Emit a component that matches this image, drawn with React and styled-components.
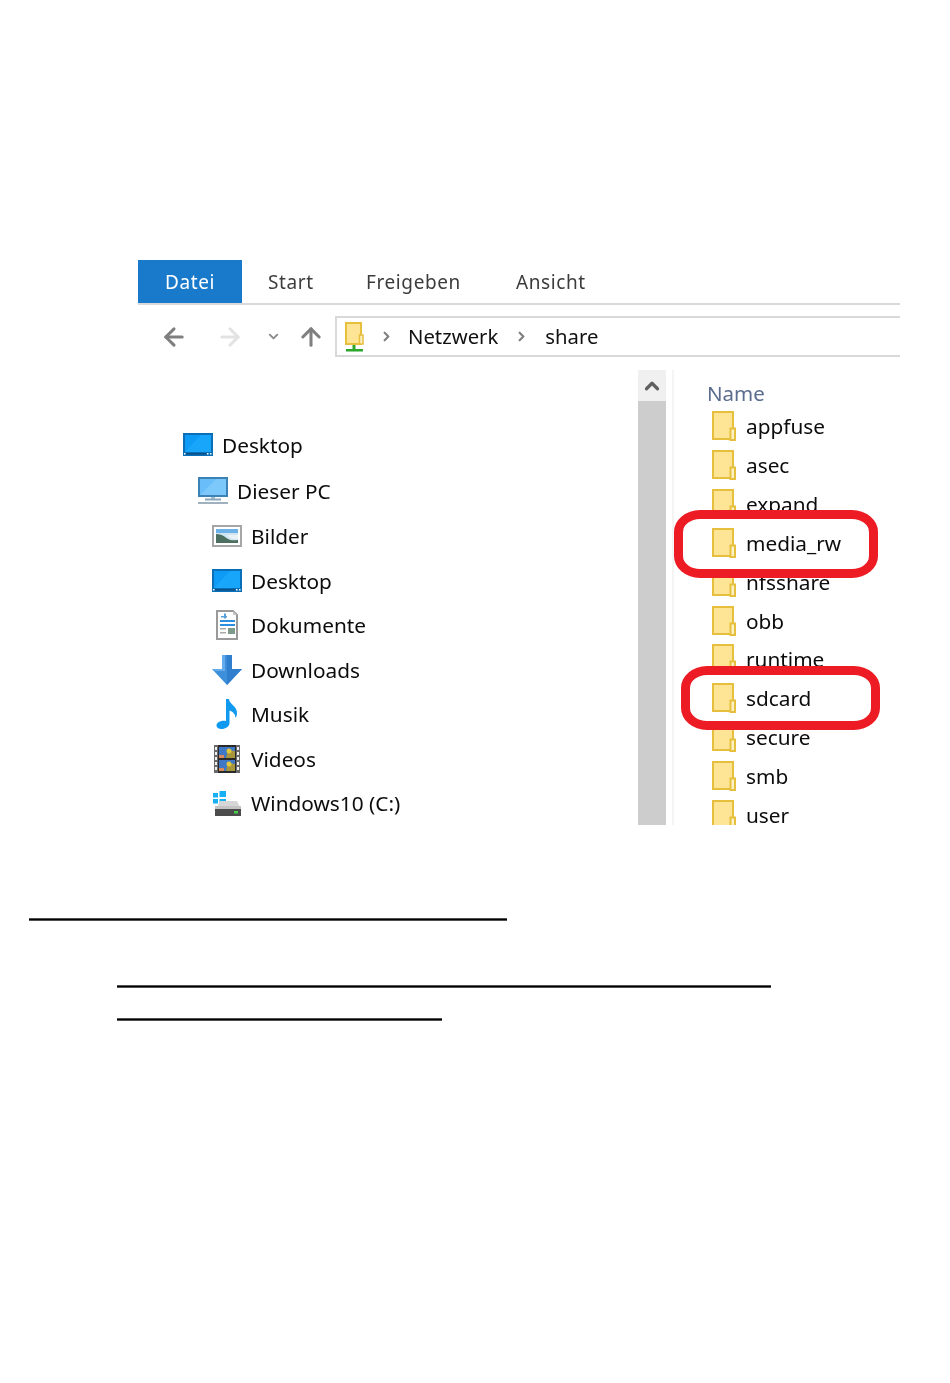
import React from 'react';
import styled, { createGlobalStyle } from 'styled-components';
import { ArrowLeft, ArrowRight, ArrowUp, ChevronDown, ChevronRight, ChevronUp } from 'lucide-react';

const GlobalStyle = createGlobalStyle`
  html, body {
    margin: 0;
    padding: 0;
    background: #fff;
  }
  body {
    font-family: 'Noto Sans', 'Open Sans', sans-serif;
  }
`;

const Page = styled.div`
  width: 950px;
  height: 1383px;
  padding-top: 260px;
  box-sizing: border-box;
  overflow: hidden;
  background: #fff;
`;

const ExplorerWindow = styled.div`
  width: 762px;
  height: 565px;
  margin-left: 138px;
  overflow: hidden;
  display: flex;
  flex-direction: column;
  filter: blur(0.35px);
`;

const TabBar = styled.div`
  display: flex;
  flex: none;
  height: 43px;
  border-bottom: 2px solid #d9d9d9;
`;

const Tab = styled.div`
  display: flex;
  align-items: center;
  justify-content: ${p => (p.$active ? 'center' : 'flex-start')};
  width: ${p => p.$width}px;
  padding-left: ${p => (p.$active ? 0 : 26)}px;
  box-sizing: border-box;
  background: ${p => (p.$active ? '#1979ca' : 'transparent')};
  color: ${p => (p.$active ? '#fff' : '#3c3c3c')};
  font-size: 19px;
  letter-spacing: 0.6px;
`;

const NavBar = styled.div`
  display: flex;
  flex: none;
  align-items: center;
  height: 41px;
  margin-top: 11px;
`;

const NavButton = styled.div`
  display: flex;
  align-items: center;
  justify-content: center;
  width: ${p => p.$width}px;
  height: 41px;
  flex: none;
`;

const AddressBox = styled.div`
  display: flex;
  align-items: center;
  flex: 1;
  height: 41px;
  box-sizing: border-box;
  margin-left: 10px;
  padding-left: 8px;
  border: 2px solid #d9d9d9;
  border-right: none;
`;

const Crumb = styled.span`
  position: relative;
  top: -1px;
  color: #111;
  font-size: 20.3px;
`;

const CrumbArrow = styled.span`
  display: flex;
  align-items: center;
  justify-content: center;
  width: ${p => p.$width}px;
`;

const Content = styled.div`
  display: flex;
  flex: 1;
  min-height: 0;
  margin-top: 13px;
`;

const NavPane = styled.div`
  width: 500px;
  flex: none;
  padding-top: 52px;
  box-sizing: border-box;
`;

const TreeRow = styled.div`
  display: flex;
  align-items: center;
  height: ${p => p.$height || 44.5}px;
  padding-left: ${p => p.$indent}px;
  color: #0c0c0c;
  font-size: 20.8px;
`;

const TreeIcon = styled.span`
  display: flex;
  align-items: center;
  justify-content: center;
  width: 30px;
  height: 32px;
  margin-right: 9px;
  flex: none;
`;

const Scrollbar = styled.div`
  width: 28px;
  flex: none;
  background: #cdcdcd;
`;

const ScrollButton = styled.div`
  display: flex;
  align-items: center;
  justify-content: center;
  height: 31px;
  background: #f0f0f0;
`;

const Divider = styled.div`
  width: 2px;
  flex: none;
  margin-left: 6px;
  background: #f4f4f4;
`;

const ListPane = styled.div`
  flex: 1;
  padding-top: 10px;
`;

const ColumnHeader = styled.div`
  height: 27px;
  line-height: 26px;
  padding-left: 33px;
  color: #5b6c8e;
  font-size: 20.5px;
`;

const FileRow = styled.div`
  position: relative;
  display: flex;
  align-items: center;
  height: 38.85px;
  padding-left: 38px;
  color: #0c0c0c;
  font-size: 20.8px;
  z-index: ${p => (p.$marked ? 2 : 'auto')};
`;

const RowContent = styled.div`
  position: relative;
  display: flex;
  align-items: center;
  z-index: 1;
`;

const FileName = styled.span`
  margin-left: 10px;
  line-height: 18px;
`;

const RedRing = styled.div`
  position: absolute;
  left: ${p => p.$left}px;
  top: ${p => p.$top}px;
  width: ${p => p.$width}px;
  height: ${p => p.$height}px;
  box-sizing: border-box;
  border: 9px solid #ed1c24;
  border-radius: 26px / 22px;
  background: #fff;
`;

const Rules = styled.div`
  display: flex;
  flex-direction: column;
`;

const Rule = styled.div`
  height: 3px;
  width: ${p => p.$width}px;
  margin-left: ${p => p.$left}px;
  margin-top: ${p => p.$gap}px;
  background: linear-gradient(#9a9a9a, #000 35%, #000 65%, #9a9a9a);
`;

const FolderIcon = () => (
  <svg width="24" height="30" viewBox="0 0 24 30">
    <rect x="1" y="1" width="20" height="27" fill="#fde595" stroke="#e6bf3f" strokeWidth="2" />
    <rect x="18.500" y="17.500" width="4.500" height="11.500" fill="#fdf1c4" stroke="#e6bf3f" strokeWidth="2" />
  </svg>
);

const NetworkFolderIcon = () => (
  <svg width="19" height="30" viewBox="0 0 19 30">
    <rect x="1" y="1" width="15" height="21" fill="#fde595" stroke="#e6bf3f" strokeWidth="2" />
    <rect x="14.500" y="13" width="3.500" height="9" fill="#fdf1c4" stroke="#e6bf3f" strokeWidth="1.500" />
    <rect x="7.500" y="23" width="3" height="4" fill="#2da62d" />
    <rect x="1" y="27" width="17" height="2.500" fill="#2da62d" />
  </svg>
);

const DesktopIcon = () => (
  <svg width="30" height="23" viewBox="0 0 30 23">
    <rect width="30" height="23" fill="#0b6fb8" />
    <rect x="2" y="2" width="26" height="17" fill="#0d9bf5" />
    <path d="M2 19 18 2h10v17z" fill="#18a6fb" />
    <rect x="3" y="20" width="20" height="1.500" fill="#0a4f86" />
    <rect x="24" y="20" width="1.500" height="1.500" fill="#fff" />
    <rect x="27" y="20" width="1.500" height="1.500" fill="#fff" />
    <rect x="1" y="20" width="1.500" height="1.500" fill="#fff" />
  </svg>
);

const ComputerIcon = () => (
  <svg width="30" height="27" viewBox="0 0 30 27">
    <rect width="30" height="20" fill="#3d82b5" />
    <rect x="2" y="2" width="26" height="16" fill="#69bdf8" />
    <path d="M2 18 18 2h10v16z" fill="#7cc8fb" />
    <rect x="13" y="20" width="4" height="3" fill="#a9bcc9" />
    <rect x="7" y="21.500" width="16" height="2" fill="#8ba7bb" />
    <rect y="25" width="30" height="2" fill="#9fb0bf" />
  </svg>
);

const PictureIcon = () => (
  <svg width="30" height="22" viewBox="0 0 30 22">
    <rect x="1" y="1" width="28" height="20" fill="#fff" stroke="#a6a6a6" strokeWidth="2" />
    <rect x="4" y="4" width="22" height="14" fill="#cfe5f2" />
    <rect x="4" y="4" width="22" height="4" fill="#6cb2e8" />
    <path d="M4 9c6 0 9 3 12 5s7 1 10 1v3H4z" fill="#4c6f5f" />
    <path d="M15 10h11v4c-4 1-8 0-11-4z" fill="#eaf2f5" />
  </svg>
);

const DocumentIcon = () => (
  <svg width="22" height="30" viewBox="0 0 22 30">
    <path d="M1 1h16l4 4v24H1z" fill="#fff" stroke="#9a9a9a" strokeWidth="2" />
    <path d="M17 1v4h4z" fill="#c8c8c8" />
    <rect x="5" y="6" width="6" height="1.500" fill="#5a9fd8" />
    <rect x="8" y="3.500" width="2" height="5" fill="#5a9fd8" />
    <rect x="4" y="10" width="15" height="2" fill="#2a8fe0" />
    <rect x="4" y="14" width="15" height="2" fill="#2a8fe0" />
    <rect x="4" y="18" width="6" height="1.500" fill="#aaa" />
    <rect x="4" y="22" width="6" height="1.500" fill="#aaa" />
    <rect x="12" y="18" width="7" height="6" fill="#7d9a8a" />
  </svg>
);

const DownloadIcon = () => (
  <svg width="30" height="30" viewBox="0 0 30 30">
    <path d="M10 0h10v14h10L15 30 0 14h10z" fill="#3d8fdc" />
    <path d="M20 0v14h10L15 30V0z" fill="#2f7fce" />
    <path d="M10 0h3v16H4l-4-2h10z" fill="#65acec" />
  </svg>
);

const MusicIcon = () => (
  <svg width="22" height="30" viewBox="0 0 22 30">
    <path d="M10 0h3c0 5 8 7 8 14 0 2-.5 4-1.500 5 .2-4-3-6.500-6-7.500V24c0 3.500-4 6-8 6-3 0-5-1.500-5-3.500C.5 23.500 5 21 10 22z" fill="#0f9af0" />
  </svg>
);

const VideoIcon = () => (
  <svg width="26" height="28" viewBox="0 0 26 28">
    <rect width="26" height="28" fill="#6a6a6a" />
    <rect x="4" width="18" height="28" fill="#2a2a2a" />
    <g fill="#f0f0f0">
      {[2, 7, 12, 17, 22].map(y => <React.Fragment key={y}>
        <rect x="1" y={y} width="2" height="3" />
        <rect x="23" y={y} width="2" height="3" />
      </React.Fragment>)}
    </g>
    <rect x="5" y="2" width="16" height="11" fill="#3f78c4" />
    <rect x="5" y="15" width="16" height="11" fill="#3f78c4" />
    <path d="M12 13l2-8 7 1v7zM12 26l2-8 7 1v7z" fill="#a8963c" />
    <circle cx="15" cy="6" r="2.500" fill="#e0c93c" />
    <circle cx="15" cy="19" r="2.500" fill="#e0c93c" />
    <path d="M5 10h5v3H5zM5 23h5v3H5z" fill="#d88a5a" />
  </svg>
);

const DriveIcon = () => (
  <svg width="28" height="25" viewBox="0 0 28 25">
    <g fill="#17b0f5">
      <rect x="0" y="2" width="5" height="4.500" />
      <rect x="6.500" y="0" width="6.500" height="6" />
      <rect x="0" y="8" width="5" height="4.500" />
      <rect x="6.500" y="8" width="6.500" height="6" />
    </g>
    <path d="M4 16 7 10h17l3 6z" fill="#d6d6d6" />
    <rect x="2" y="15" width="26" height="3" fill="#c4c4c4" />
    <rect x="2" y="18" width="26" height="7" fill="#4c4c4c" />
    <rect x="21" y="20" width="4" height="2.500" fill="#45d04a" />
  </svg>
);

const places = [
  { name: 'Bilder', icon: <PictureIcon /> },
  { name: 'Desktop', icon: <DesktopIcon /> },
  { name: 'Dokumente', icon: <DocumentIcon /> },
  { name: 'Downloads', icon: <DownloadIcon /> },
  { name: 'Musik', icon: <MusicIcon /> },
  { name: 'Videos', icon: <VideoIcon /> },
  { name: 'Windows10 (C:)', icon: <DriveIcon /> },
];

const folders = [
  { name: 'appfuse' },
  { name: 'asec' },
  { name: 'expand' },
  { name: 'media_rw', ring: { left: 0, top: -14, width: 204, height: 68 } },
  { name: 'nfsshare' },
  { name: 'obb' },
  { name: 'runtime' },
  { name: 'sdcard', ring: { left: 7, top: -13, width: 199, height: 64 } },
  { name: 'secure' },
  { name: 'smb' },
  { name: 'user' },
];

const App = () => (
  <Page>
    <GlobalStyle />
    <ExplorerWindow>
      <TabBar>
        <Tab $active $width={104}>Datei</Tab>
        <Tab $width={98}>Start</Tab>
        <Tab $width={150}>Freigeben</Tab>
        <Tab $width={130}>Ansicht</Tab>
      </TabBar>
      <NavBar>
        <NavButton $width={72}><ArrowLeft size={28} color="#7f7f7f" strokeWidth={2.6} /></NavButton>
        <NavButton $width={40}><ArrowRight size={28} color="#e3e3e3" strokeWidth={2.6} /></NavButton>
        <NavButton $width={46}><ChevronDown size={15} color="#8a8a8a" strokeWidth={3} /></NavButton>
        <NavButton $width={29}><ArrowUp size={28} color="#7f7f7f" strokeWidth={2.6} /></NavButton>
        <AddressBox>
          <NetworkFolderIcon />
          <CrumbArrow $width={44}><ChevronRight size={15} color="#808080" strokeWidth={3.5} /></CrumbArrow>
          <Crumb>Netzwerk</Crumb>
          <CrumbArrow $width={47}><ChevronRight size={15} color="#808080" strokeWidth={3.5} /></CrumbArrow>
          <Crumb>share</Crumb>
        </AddressBox>
      </NavBar>
      <Content>
        <NavPane>
          <TreeRow $indent={45} $height={45}><TreeIcon><DesktopIcon /></TreeIcon>Desktop</TreeRow>
          <TreeRow $indent={60} $height={47}><TreeIcon><ComputerIcon /></TreeIcon>Dieser PC</TreeRow>
          {places.map(place => (
            <TreeRow key={place.name} $indent={74}>
              <TreeIcon>{place.icon}</TreeIcon>
              {place.name}
            </TreeRow>
          ))}
        </NavPane>
        <Scrollbar>
          <ScrollButton><ChevronUp size={22} color="#606060" strokeWidth={3.5} /></ScrollButton>
        </Scrollbar>
        <Divider />
        <ListPane>
          <ColumnHeader>Name</ColumnHeader>
          {folders.map(folder => (
            <FileRow key={folder.name} $marked={!!folder.ring}>
              {folder.ring && <RedRing $left={folder.ring.left} $top={folder.ring.top} $width={folder.ring.width} $height={folder.ring.height} />}
              <RowContent>
                <FolderIcon />
                <FileName>{folder.name}</FileName>
              </RowContent>
            </FileRow>
          ))}
        </ListPane>
      </Content>
    </ExplorerWindow>
    <Rules>
      <Rule $left={29} $width={478} $gap={93} />
      <Rule $left={117} $width={654} $gap={64} />
      <Rule $left={117} $width={325} $gap={30} />
    </Rules>
  </Page>
);

export default App;
